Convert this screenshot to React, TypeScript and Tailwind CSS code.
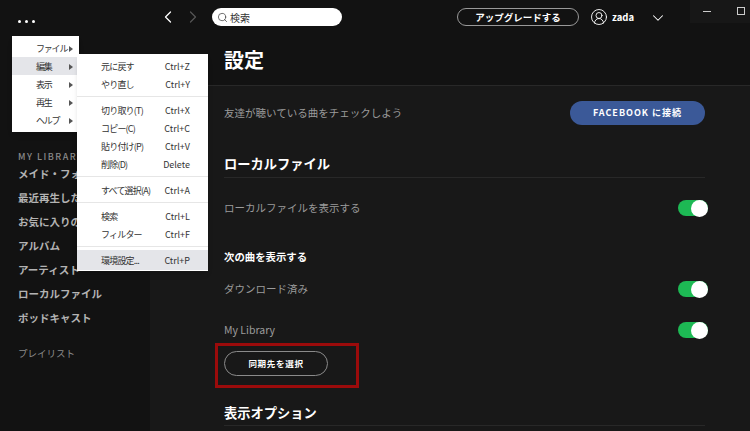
import { ChevronLeft, ChevronRight, ChevronDown, Search, CircleUserRound } from 'lucide-react';

const font = "font-['Noto_Sans_CJK_JP','Noto_Sans',sans-serif]";

const libraryItems = ['メイド・フォー・ユー', '最近再生した曲', 'お気に入りの曲', 'アルバム', 'アーティスト', 'ローカルファイル', 'ポッドキャスト'];
const topMenu = ['ファイル', '編集', '表示', '再生', 'ヘルプ'];

const editGroups = [
  [['元に戻す', 'Ctrl+Z'], ['やり直し', 'Ctrl+Y']],
  [['切り取り(T)', 'Ctrl+X'], ['コピー(C)', 'Ctrl+C'], ['貼り付け(P)', 'Ctrl+V'], ['削除(D)', 'Delete']],
  [['すべて選択(A)', 'Ctrl+A']],
  [['検索', 'Ctrl+L'], ['フィルター', 'Ctrl+F']],
];

function Toggle() {
  return (
    <div className="flex h-[16px] w-[30px] items-center justify-end rounded-full bg-[#1db954]">
      <div className="h-[17px] w-[17px] rounded-full bg-white" />
    </div>
  );
}

function Row({ label, className }: { label: string; className: string }) {
  return (
    <div className={`flex items-center justify-between pr-[42px] ${className}`}>
      <span className="text-[10.5px] leading-[16px] text-[#9b9b9b]">{label}</span>
      <Toggle />
    </div>
  );
}

function FileMenu() {
  return (
    <div className="absolute left-[12px] top-[36px] z-10 w-[67px] bg-white py-[3px] shadow-md">
      {topMenu.map((m, i) => (
        <div key={m} className={`flex h-[18px] items-center justify-between whitespace-nowrap pl-[24px] pr-[6px] pt-[2px] text-[9px] tracking-[-1.2px] text-[#333] ${i === 1 ? 'bg-[#e4e5e9]' : ''}`}>
          <span>{m}</span>
          <span className="h-0 w-0 border-y-[3px] border-l-[4px] border-y-transparent border-l-[#555]" />
        </div>
      ))}
    </div>
  );
}

function MenuItem({ name, shortcut, className = 'h-[18px]' }: { name: string; shortcut: string; className?: string }) {
  return (
    <div className={`flex items-center justify-between whitespace-nowrap pl-[24px] pr-[18px] pt-[2px] text-[9px] text-[#333] ${className}`}>
      <span className="tracking-[-0.8px]">{name}</span>
      <span>{shortcut}</span>
    </div>
  );
}

function EditMenu() {
  return (
    <div className="absolute left-[77px] top-[54px] z-20 w-[131px] bg-white pt-[3px] shadow-md">
      {editGroups.map((group, g) => (
        <div key={g} className={g === 0 ? 'pb-[3px]' : 'border-t border-[#e6e6e6] pb-[3px] pt-[4px]'}>
          {group.map(([name, shortcut]) => (
            <MenuItem key={name} name={name} shortcut={shortcut} />
          ))}
        </div>
      ))}
      <div className="border-t border-[#e6e6e6] pb-px pt-[3px]">
        <MenuItem name="環境設定..." shortcut="Ctrl+P" className="h-[20px] bg-[#e4e5e9]" />
      </div>
    </div>
  );
}

export default function App() {
  return (
    <div className={`relative flex h-[431px] w-[750px] overflow-hidden bg-[#121212] ${font}`}>
      <aside className="flex w-[150px] shrink-0 flex-col pl-[18px] pt-[151px]">
        <div className="text-[9px] font-medium leading-[11px] tracking-[1.5px] text-[#8a8a8a]">MY LIBRARY</div>
        <div className="flex flex-col">
          {libraryItems.map((item) => (
            <div key={item} className="h-[24px] whitespace-nowrap text-[10.5px] font-bold leading-[24px] text-[#b3b3b3]">{item}</div>
          ))}
        </div>
        <div className="mt-[16px] text-[9.5px] leading-[14px] text-[#8a8a8a]">プレイリスト</div>
      </aside>

      <div className="flex min-w-0 flex-1 flex-col">
        <header className="h-[86px] shrink-0 border-b border-[#282828] pl-[74px]">
          <div className="flex h-[34px] items-center">
            <ChevronLeft size={20} strokeWidth={1.5} className="ml-[-66px] text-white" />
            <ChevronRight size={20} strokeWidth={1.5} className="ml-[5px] text-[#555]" />
            <div className="ml-[9px] flex h-[18px] w-[130px] items-center rounded-full bg-white pl-[5px] text-[10px] text-[#333]">
              <Search size={11} strokeWidth={1.5} className="mr-[2px] text-[#333]" />
              <span>検索</span>
            </div>
            <div className="ml-[115px] flex h-[18px] w-[122px] items-center justify-center rounded-full border border-[#999] text-[9.5px] font-bold text-white">アップグレードする</div>
            <CircleUserRound size={18} strokeWidth={1.2} className="ml-[11px] text-white" />
            <span className="ml-[4px] text-[9.5px] font-bold text-white">zada</span>
            <ChevronDown size={18} strokeWidth={1.4} className="ml-[15px] mt-[2px] text-white" />
          </div>
          <h1 className="mt-[13px] text-[20px] font-bold leading-[26px] text-white">設定</h1>
        </header>

        <main className="flex-1 bg-[#181818] pl-[74px]">
          <div className="flex items-center justify-between pr-[45px] pt-[15px]">
            <span className="text-[10.5px] leading-[24px] text-[#9b9b9b]">友達が聴いている曲をチェックしよう</span>
            <button className="flex h-[24px] w-[135px] items-center justify-center rounded-full bg-[#3b5998] text-[9px] font-bold tracking-[1px] text-white">FACEBOOK に接続</button>
          </div>
          <h2 className="mr-[45px] mt-[29px] border-b border-[#282828] pb-[3px] text-[13.25px] font-bold leading-[20px] text-white">ローカルファイル</h2>
          <Row label="ローカルファイルを表示する" className="mt-[22px]" />
          <div className="mt-[33px] text-[10.4px] font-bold leading-[16px] text-white">次の曲を表示する</div>
          <Row label="ダウンロード済み" className="mt-[16px]" />
          <Row label="My Library" className="mt-[25px]" />
          <button className="mt-[13px] flex h-[25px] w-[104px] items-center justify-center rounded-full border border-[#8a8a8a] text-[8.5px] font-bold tracking-[0.7px] text-white">同期先を選択</button>
          <h2 className="mr-[45px] mt-[27px] border-b border-[#282828] pb-[2px] text-[13.25px] font-bold leading-[20px] text-white">表示オプション</h2>
        </main>
      </div>

      <div className="absolute left-[18px] top-[20px] flex gap-[4px]">
        <span className="h-[3px] w-[3px] rounded-full bg-white" />
        <span className="h-[3px] w-[3px] rounded-full bg-white" />
        <span className="h-[3px] w-[3px] rounded-full bg-white" />
      </div>
      <div className="absolute right-0 top-0 h-[23px] w-[60px] bg-[#171717]">
        <span className="absolute left-[13px] top-[11px] h-px w-[8px] bg-[#ccc]" />
        <span className="absolute left-[47px] top-[7px] h-[8px] w-[8px] border border-[#ccc]" />
      </div>

      <FileMenu />
      <EditMenu />
      <div className="absolute left-[215px] top-[343px] h-[45px] w-[144px] border-[3px] border-[#9b0b0b]" />
    </div>
  );
}
